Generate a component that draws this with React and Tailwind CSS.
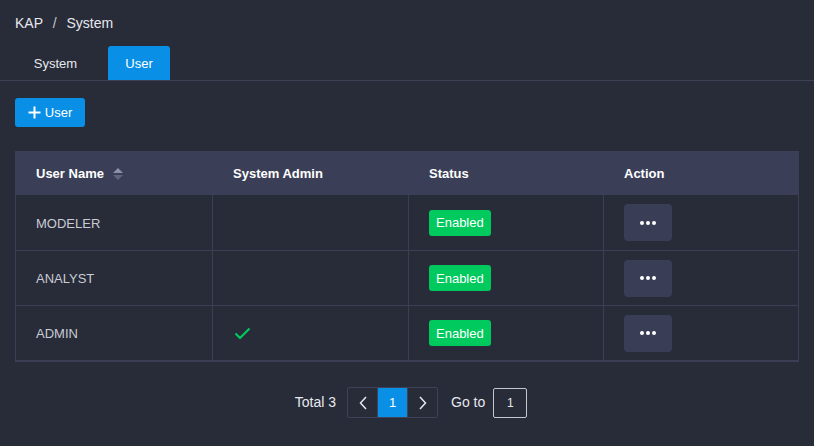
import React from 'react';

const users = [
  { name: 'MODELER', admin: false, status: 'Enabled' },
  { name: 'ANALYST', admin: false, status: 'Enabled' },
  { name: 'ADMIN', admin: true, status: 'Enabled' },
];

const SortIcon = () => (
  <svg width="12" height="14" viewBox="0 0 12 14" className="ml-2">
    <path d="M6 1 L11 6 H1 Z" fill="#8a93a6" />
    <path d="M6 13 L11 8 H1 Z" fill="#5d667a" />
  </svg>
);

const Check = () => (
  <svg width="17" height="13" viewBox="0 0 17 13">
    <path d="M1.5 6.5 L6 11 L15.5 1.5" fill="none" stroke="#00c95d" strokeWidth="2.2" />
  </svg>
);

const App = () => {
  return (
    <div
      className="w-[814px] h-[446px] bg-[#282b38] text-white overflow-hidden"
      style={{ fontFamily: '"Liberation Sans", Arial, sans-serif' }}
    >
      <div className="pl-[15px] pt-[13px] text-[14px] text-[#e6e8ee] h-[46px]">
        KAP <span className="mx-[6px] text-[#c5c8d0]">/</span> System
      </div>

      <div className="flex items-end h-[35px] border-b border-[#3d4255] pl-[15px]">
        <div className="w-[81px] h-[34px] pt-[2px] flex items-center justify-center text-[13px] text-[#e6e8ee]">
          System
        </div>
        <div className="ml-[12px] w-[62px] h-[34px] pt-[1px] flex items-center justify-center text-[13px] text-white bg-[#0a8fe6] rounded-t-[3px]">
          User
        </div>
      </div>

      <div className="pl-[15px] pt-[17px]">
        <button className="w-[70px] h-[29px] bg-[#0a8fe6] rounded-[3px] flex items-center justify-center gap-[4px] text-[13px] text-white">
          <svg width="13" height="13" viewBox="0 0 13 13">
            <path d="M6.5 0.5 V12.5 M0.5 6.5 H12.5" stroke="#fff" strokeWidth="2" />
          </svg>
          User
        </button>
      </div>

      <div className="mx-[15px] mt-[24px] border-l border-r border-b-2 border-[#3a3f55]">
        <div className="grid grid-cols-[197px_196px_195px_1fr] h-[44px] pt-[2px] bg-[#3a3f57] text-[13px] font-bold text-white">
          <div className="flex items-center pl-[20px]">
            User Name <SortIcon />
          </div>
          <div className="flex items-center pl-[20px]">System Admin</div>
          <div className="flex items-center pl-[20px]">Status</div>
          <div className="flex items-center pl-[20px]">Action</div>
        </div>
        {users.map((u, i) => (
          <div
            key={u.name}
            className={`grid grid-cols-[197px_196px_195px_1fr] h-[55px] text-[13px] text-[#c9ccd4] ${i > 0 ? 'border-t border-[#3a3f55]' : ''}`}
          >
            <div className="flex items-center pl-[20px] pt-[2px] border-r border-[#3a3f55]">{u.name}</div>
            <div className="flex items-center pl-[21px] border-r border-[#3a3f55]">
              {u.admin && <Check />}
            </div>
            <div className="flex items-center pl-[20px] border-r border-[#3a3f55]">
              <span className="h-[26px] px-[7px] pt-[1px] flex items-center bg-[#00c95d] rounded-[3px] text-white">
                {u.status}
              </span>
            </div>
            <div className="flex items-center pl-[20px]">
              <button className="w-[48px] h-[37px] bg-[#393e56] rounded-[4px] flex items-center justify-center gap-[2px]">
                <span className="w-[4px] h-[4px] rounded-full bg-white" />
                <span className="w-[4px] h-[4px] rounded-full bg-white" />
                <span className="w-[4px] h-[4px] rounded-full bg-white" />
              </button>
            </div>
          </div>
        ))}
      </div>

      <div className="flex items-center justify-center mt-[25px] pl-[8px] text-[14px] text-[#e6e8ee]">
        <span className="mr-[11px]">Total 3</span>
        <div className="flex h-[31px] border border-[#3d4257] rounded-[2px]">
          <div className="w-[30px] flex items-center justify-center border-r border-[#3d4257]">
            <svg width="8" height="14" viewBox="0 0 8 14">
              <path d="M7 1 L1.5 7 L7 13" fill="none" stroke="#e6e8ee" strokeWidth="1.5" />
            </svg>
          </div>
          <div className="w-[29px] flex items-center justify-center bg-[#0a8fe6] text-white text-[13px]">1</div>
          <div className="w-[30px] flex items-center justify-center border-l border-[#3d4257]">
            <svg width="8" height="14" viewBox="0 0 8 14">
              <path d="M1 1 L6.5 7 L1 13" fill="none" stroke="#e6e8ee" strokeWidth="1.5" />
            </svg>
          </div>
        </div>
        <span className="ml-[13px] mr-[8px]">Go to</span>
        <div className="w-[34px] h-[30px] border border-[#c4c7cf] rounded-[2px] flex items-center justify-center text-[12px]">
          1
        </div>
      </div>
    </div>
  );
};

export default App;
